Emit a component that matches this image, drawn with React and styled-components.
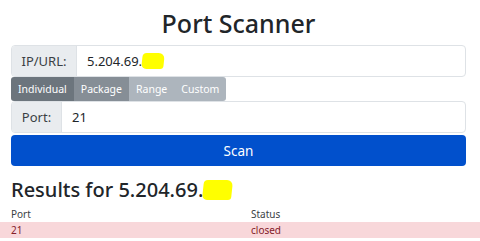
import styled, { createGlobalStyle } from 'styled-components';

const GlobalStyle = createGlobalStyle`
  body {
    margin: 0;
    background: #fff;
    font-family: "Segoe UI", "Noto Sans", sans-serif;
    color: #212529;
  }
`;

const tabs = [
  { id: 1, label: 'Individual', tone: 'active' },
  { id: 2, label: 'Package', tone: 'mid' },
  { id: 3, label: 'Range', tone: 'light' },
  { id: 4, label: 'Custom', tone: 'light' },
];

const tones = {
  active: '#6c757d',
  mid: '#868e96',
  light: '#adb5bd',
};

const App = () => {
  return <>
    <GlobalStyle />
    <Page>
      <Title>Port Scanner</Title>
      <InputGroup>
        <Addon $w={64}>IP/URL:</Addon>
        <Field>5.204.69.<Redact $w={22} $h={16} /></Field>
      </InputGroup>
      <Tabs>
        {tabs.map((t) => (
          <Tab key={t.id} $tone={t.tone}>{t.label}</Tab>
        ))}
      </Tabs>
      <InputGroup>
        <Addon $w={49}>Port:</Addon>
        <Field>21</Field>
      </InputGroup>
      <ScanButton>Scan</ScanButton>
      <Results>Results for 5.204.69.<Redact $w={29} $h={20} /></Results>
    </Page>
    <Table>
      <thead>
        <tr><Th>Port</Th><Th>Status</Th></tr>
      </thead>
      <tbody>
        <Row $status="closed"><Td>21</Td><Td>closed</Td></Row>
      </tbody>
    </Table>
  </>
};

export default App;

const Page = styled.div`
  padding: 0 14px 0 11px;
  display: flex;
  flex-direction: column;
`
const Title = styled.h1`
  margin: 11px 0 10px;
  text-align: center;
  font-size: 25px;
  font-weight: 500;
  line-height: 24px;
`
const InputGroup = styled.div`
  display: flex;
  height: 32px;
  border: 1px solid #dee2e6;
  border-radius: 4px;
  box-sizing: border-box;
  overflow: hidden;
`
const Addon = styled.div`
  width: ${(p) => p.$w}px;
  background: #e9ecef;
  border-right: 1px solid #dee2e6;
  display: flex;
  align-items: center;
  justify-content: center;
  font-size: 13px;
  color: #3a3f44;
`
const Field = styled.div`
  flex: 1;
  display: flex;
  align-items: center;
  padding-left: 10px;
  font-size: 13px;
  color: #212529;
`
const Redact = styled.span`
  display: inline-block;
  width: ${(p) => p.$w}px;
  height: ${(p) => p.$h}px;
  background: #ffff00;
  border-radius: 4px 6px 3px 5px;
  transform: skewX(-6deg);
`
const Tabs = styled.div`
  display: flex;
  height: 24px;
`
const Tab = styled.div`
  background: ${(p) => tones[p.$tone]};
  color: #fff;
  font-size: 10.5px;
  display: flex;
  align-items: center;
  padding: 0 7px;
  &:first-child { border-radius: 3px 0 0 3px; }
  &:last-child { border-radius: 0 3px 3px 0; }
`
const ScanButton = styled.div`
  margin-top: 2px;
  height: 31px;
  background: #0150cc;
  border-radius: 4px;
  color: #fff;
  font-size: 13.5px;
  display: flex;
  align-items: center;
  justify-content: center;
`
const Results = styled.h2`
  margin: 12px 0 0;
  font-size: 20px;
  font-weight: 500;
  display: flex;
  align-items: center;
  line-height: 24px;
`
const Table = styled.table`
  width: 100%;
  border-collapse: collapse;
  table-layout: fixed;
  margin-top: 4px;
  font-size: 10px;
`
const Th = styled.th`
  text-align: left;
  font-weight: 400;
  padding: 0 0 0 11px;
  height: 16px;
  color: #3a3f44;
`
const Row = styled.tr`
  background: ${(p) => (p.$status === 'closed' ? '#f8d7da' : '#d1e7dd')};
  color: #842029;
`
const Td = styled.td`
  padding: 0 0 0 11px;
  height: 16px;
`
